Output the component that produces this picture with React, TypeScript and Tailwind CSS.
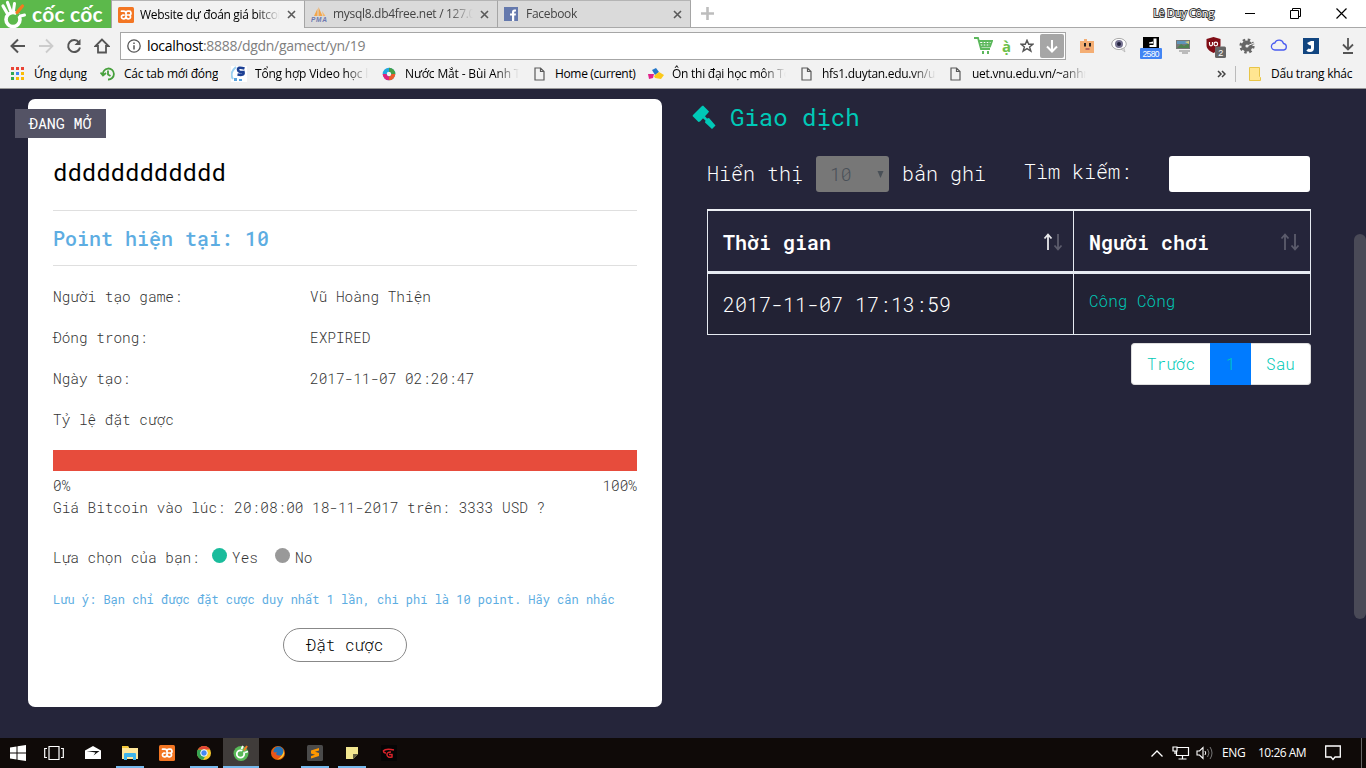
import React from "react";

const mono = "font-['Roboto_Mono','Liberation_Mono',monospace]";

const Svg = ({ s = 16, w, h, vb, children }: { s?: number; w?: number; h?: number; vb?: string; children: React.ReactNode }) => (
  <svg width={w ?? s} height={h ?? s} viewBox={vb ?? `0 0 ${w ?? s} ${h ?? s}`} fill="none" className="block shrink-0">
    {children}
  </svg>
);

const Xampp = () => (
  <Svg vb="0 0 16 16">
    <rect width="16" height="16" rx="1.500" fill="#f37623" />
    <path d="M3.500 4.200h2C7.500 4.200 8 5 8 6.500v3c0 1.500.5 2.300 2.300 2.300h.4a1.900 1.900 0 0 0 .6-3.700 1.900 1.900 0 0 0-.6-3.900H10C8.500 4.200 8 5 8 6.500M8 9.500c0 1.500-.5 2.300-2.300 2.300h-.4a1.900 1.900 0 0 1-.6-3.700H6M8 8h3" stroke="#fff" strokeWidth="1.700" strokeLinecap="round" />
  </Svg>
);

const CloseX = () => (
  <Svg s={9}>
    <path d="M1 1l7 7M8 1L1 8" stroke="#5a5a5a" strokeWidth="1.6" />
  </Svg>
);

const PageIcon = () => (
  <Svg w={11} h={14}>
    <path d="M1 1h5.500L10 4.500V13H1zM6.500 1v3.500H10" stroke="#5a5a5a" strokeWidth="1.200" />
  </Svg>
);

const fade = "[mask-image:linear-gradient(to_right,#000_calc(100%_-_24px),transparent)]";

const Tab = ({ icon, label, active, cls }: { icon: React.ReactNode; label: string; active?: boolean; cls: string }) => (
  <div className={`flex h-7 w-[193px] shrink-0 items-center border-r border-t border-r-[#a5a5a5] border-t-[#b4b4b4] pl-[6px] ${active ? "bg-[#f2f2f2]" : "border-b border-b-[#a9a9a9] bg-[#dadada]"}`}>
    {icon}
    <div className={`ml-[6px] w-[140px] overflow-hidden whitespace-nowrap text-[12px] ${fade} ${cls}`}>{label}</div>
    <div className="ml-[7px]"><CloseX /></div>
  </div>
);

const Bookmark = ({ icon, label, w, iw, clip, cls }: { icon: React.ReactNode; label: string; w: string; iw: string; clip?: boolean; cls: string }) => (
  <div className={`flex shrink-0 items-center ${w}`}>
    <div className={`shrink-0 ${iw}`}>{icon}</div>
    <div className={`overflow-hidden whitespace-nowrap ${clip ? `w-[114px] ${fade}` : ""} ${cls}`}>{label}</div>
  </div>
);

const TabStrip = () => (
  <div className="flex h-7 border-b border-[#a9a9a9] bg-white">
    <div className="flex h-7 w-[112px] shrink-0 items-start border-r border-[#a5a5a5] bg-[#5cb94b]">
      <Svg w={28} h={28}>
        <circle cx="13" cy="19.500" r="7" stroke="#fff" strokeWidth="3.600" />
        <path d="M13 19.500l6-6" stroke="#5cb94b" strokeWidth="3" />
        <path d="M3 6l4 7M7.500 2.500l3 8" stroke="#fff" strokeWidth="3.200" strokeLinecap="round" />
        <path d="M13.500 10.500L14.500 3.500M20.500 16l4-1" stroke="#fff" strokeWidth="3" strokeLinecap="round" />
        <path d="M17 12.500l5.500-6.500" stroke="#f47b20" strokeWidth="3.200" strokeLinecap="round" />
      </Svg>
      <div className="ml-[4px] whitespace-nowrap font-['Lato',sans-serif] text-[21px] font-bold leading-[27px] tracking-[0.2px] text-white">cốc cốc</div>
    </div>
    <Tab active icon={<Xampp />} label="Website dự đoán giá bitcoin" cls="text-black tracking-[-0.3px]" />
    <Tab
      icon={
        <Svg>
          <path d="M3 10L6.500 2.500V10zM7.500 10V1l4 9z" fill="#f3a64b" />
          <path d="M11 5l3.500 5H12z" fill="#f6b86b" />
          <text x="0" y="15.500" fontSize="6.500" fontWeight="bold" fontStyle="italic" fontFamily="Liberation Sans" fill="#6c78af" textLength="16">PMA</text>
        </Svg>
      }
      label="mysql8.db4free.net / 127.0.0.1"
      cls="text-[#444] tracking-[-0.3px]"
    />
    <Tab
      icon={
        <Svg w={14} h={14}>
          <rect width="14" height="14" fill="#6579ad" />
          <path d="M8 14V8.500H6V6.500h2V5q0-2.500 2.500-2.500H12v2h-1q-.8 0-.8.8v1.200H12l-.3 2h-1.500V14z" fill="#fff" />
        </Svg>
      }
      label="Facebook"
      cls="text-[#444] tracking-[-0.3px] !ml-[8px]"
    />
    <div className="flex w-8 items-center justify-center">
      <Svg s={13}><path d="M6.500 0v13M0 6.500h13" stroke="#bdbdbd" strokeWidth="2.600" /></Svg>
    </div>
    <div className="flex-1" />
    <div className="mr-[31px] flex items-center whitespace-nowrap text-[11px] tracking-[-0.3px] text-white [paint-order:stroke_fill] [-webkit-text-stroke:1.800px_#333]">Lê Duy Công</div>
    <div className="flex items-center pr-[19px]">
      <div className="mr-[35px] h-px w-[10px] bg-black" />
      <Svg s={11}><path d="M.5 2.500h8v8h-8zM2.500 2.500v-2h8v8h-2" stroke="#000" /></Svg>
      <div className="ml-[35px]"><Svg s={11}><path d="M.5.500l10 10M10.500.500l-10 10" stroke="#000" strokeWidth="1.200" /></Svg></div>
    </div>
  </div>
);

const navIcons = [
  <Svg key="b"><path d="M15 8H2M8 1.500L1.500 8 8 14.500" stroke="#555" strokeWidth="2" /></Svg>,
  <Svg key="f"><path d="M1 8h13M8 1.500L14.500 8 8 14.500" stroke="#ccc" strokeWidth="1.800" /></Svg>,
  <Svg key="r"><path d="M13 4.500A6 6 0 1 0 14 9.500" stroke="#555" strokeWidth="2" /><path d="M14.500 1v6h-6z" fill="#555" /></Svg>,
  <Svg key="h"><path d="M8 1.500L1.500 8H4v6.500h8V8h2.500z" stroke="#555" strokeWidth="1.800" /></Svg>,
];

const extIcons = [
  <Svg key="1" s={16}><path d="M1 3h4V1h3v2h7v12H1z" fill="#f4ae74" /><path d="M6 5v3.500M11 5v3.500" stroke="#222" strokeWidth="2" /><path d="M6.500 11h4" stroke="#a55" strokeWidth="1.600" /></Svg>,
  <Svg key="2" s={16}><ellipse cx="8" cy="7" rx="7.300" ry="5.600" fill="#fff" stroke="#aaa" /><path d="M10 12l4 3-1-4z" fill="#ddd" stroke="#aaa" strokeWidth=".6" /><circle cx="8" cy="7" r="4" fill="#767391" /><circle cx="8" cy="7" r="2" fill="#242440" /></Svg>,
  <Svg key="3" w={22} h={24}><rect x="3" y="1" width="16" height="12" fill="#000" /><path d="M13.500 2.500h3V11h-7V9h4zM9 6.500l4-1v2H9z" fill="#fff" /><rect y="12" width="22" height="11" rx="1" fill="#4285f4" /><text x="2.500" y="20.500" fontSize="8.500" fontFamily="Liberation Sans" fill="#fff" textLength="17">2580</text></Svg>,
  <Svg key="4" s={16}><rect x="1" y="2" width="14" height="9" fill="#777" /><path d="M2 3h12v3H2z" fill="#5f95ba" /><path d="M2 10l4-4 3 2 5-3v5z" fill="#4e8350" /><path d="M10 4l4-1v3z" fill="#d8d080" /><path d="M4 13h11M7 15h6" stroke="#bbb" strokeWidth="2" /></Svg>,
  <Svg key="5" w={22} h={22}><path d="M9.500 1l7 2v6c0 4-3 6-7 8-4-2-7-4-7-8V3z" fill="#800d16" /><path d="M5.500 6v2q0 1.800 1.500 1.800T8.500 8V6" stroke="#fff" strokeWidth="1.200" /><circle cx="11.800" cy="8" r="1.800" stroke="#fff" strokeWidth="1.200" /><rect x="11" y="10.500" width="11" height="11.500" rx="1.500" fill="#666" /><text x="14.200" y="19.500" fontSize="9" fontFamily="Liberation Sans" fill="#fff">2</text></Svg>,
  <Svg key="6" s={16}><circle cx="8" cy="8" r="6.400" stroke="#666" strokeWidth="2.400" strokeDasharray="2.500 2.520" /><circle cx="8" cy="8" r="3.600" stroke="#666" strokeWidth="4" /><path d="M8 8l7-3" stroke="#f1f1f1" strokeWidth="1" /></Svg>,
  <Svg key="7" s={18}><path d="M5 14a3.500 3.500 0 0 1-.2-7A4.600 4.600 0 0 1 13.500 7.500 3.300 3.300 0 0 1 13.700 14z" stroke="#4a5cf0" strokeWidth="1.300" /></Svg>,
  <Svg key="8" s={16}><rect width="16" height="16" fill="#114580" /><path d="M9.500 3v7q0 2.500-2.500 2.500-1.700 0-2.500-1" stroke="#fff" strokeWidth="3" /><path d="M4 5l4-2v4.500L6 7z" fill="#fff" /></Svg>,
];

const Toolbar = () => (
  <div className="flex h-[33px] items-center bg-[#f2f2f2] pl-1 pt-[3px]">
    {navIcons.map((n, i) => <div key={i} className="flex w-7 justify-center">{n}</div>)}
    <div className="ml-1 flex h-7 w-[946px] items-center border border-[#a6a6a6] bg-white pl-[6px] pr-[1px]">
      <Svg s={14}><circle cx="7" cy="7" r="6.200" stroke="#555" strokeWidth="1.300" /><path d="M7 6.200v4.300M7 3.500v1.500" stroke="#555" strokeWidth="1.500" /></Svg>
      <div className="ml-[6px] flex-1 whitespace-nowrap pb-px text-[14px] tracking-[-0.3px] text-[#808080]"><span className="text-black">localhost</span>:8888/dgdn/gamect/yn/19</div>
      <Svg w={19} h={18}><path d="M0 1h4l3 11h9M5 4h13l-2 5.500H7" stroke="#5cb85c" strokeWidth="1.800" /><path d="M6 6.800h11M9 4v6M12 4v6M15 4v6" stroke="#5cb85c" strokeWidth="1.400" /><path d="M8 15.500h2M13 15.500h2" stroke="#5cb85c" strokeWidth="3" /></Svg>
      <div className="w-[27px] pb-px text-center text-[15px] font-bold leading-4 text-[#6cbf4a]">ạ̀</div>
      <Svg s={14}><path d="M7 1.200l1.700 4h4.300l-3.400 2.700 1.300 4.300L7 9.700l-3.900 2.500 1.300-4.300L1 5.200h4.300z" stroke="#555" strokeWidth="1.400" /></Svg>
      <div className="ml-[6px] flex h-6 w-6 items-center justify-center rounded-[2px] bg-[#a6a6a6]"><Svg s={14}><path d="M7 1v11M2 7.500l5 5 5-5" stroke="#fff" strokeWidth="2" /></Svg></div>
    </div>
    <div className="ml-[5px] flex items-center">
      {extIcons.map((e, i) => (
        <div key={i} className={`flex h-6 w-8 items-start justify-center ${i === 2 || i === 4 || i === 6 ? "pt-[2px]" : i === 1 ? "pt-[3px]" : "pt-1"}`}>{e}</div>
      ))}
      <div className="ml-[15px]"><Svg w={12} h={16}><path d="M6 0v11M1 6.500l5 5 5-5M1 15h10" stroke="#555" strokeWidth="1.800" /></Svg></div>
    </div>
  </div>
);

const dots = ["#ea4335", "#ea4335", "#ea4335", "#34a853", "#4285f4", "#fbbc05", "#34a853", "#fbbc05", "#fbbc05"];

const Bookmarks = () => (
  <div className="flex h-[28px] items-center border-b border-[#999] bg-[#f2f2f2] pb-[2px] pl-[11px] text-[12px] text-black">
    <Bookmark w="w-[89px]" iw="w-[23px]" label="Ứng dụng" cls="tracking-[-0.25px]" icon={<Svg s={13}>{dots.map((c, i) => <rect key={i} x={(i % 3) * 5} y={Math.floor(i / 3) * 5} width="3" height="3" fill={c} />)}</Svg>} />
    <Bookmark w="w-[131px]" iw="w-[24px]" label="Các tab mới đóng" cls="tracking-[-0.2px]" icon={<Svg s={16}><path d="M3 9A5.500 5.500 0 1 1 8 13.500M8 4.500V8.500l2.500 1.500M.5 6.500L3 9.500l3-2.500" stroke="#46a03c" strokeWidth="1.800" /></Svg>} />
    <Bookmark w="w-[151px]" iw="w-[24px]" clip label="Tổng hợp Video học lập trình" cls="tracking-[-0.2px]" icon={<Svg s={16}><rect width="16" height="16" fill="#fff" /><path d="M5 1Q-2 7 2 13" stroke="#9cd0f0" strokeWidth="2" /><path d="M13.500 2.500Q7 .5 7 3.500t5.500 2.500q1 4-6 2.500" stroke="#1c3f94" strokeWidth="2.600" /><path d="M3 12h3v3H3zM8 13h3v2H8z" fill="#5ba3dd" /></Svg>} />
    <Bookmark w="w-[152px]" iw="w-[23px]" clip label="Nước Mắt - Bùi Anh Tuấn" cls="tracking-[-0.15px]" icon={<Svg s={14}><circle cx="7" cy="7" r="4.300" stroke="#21a8e0" strokeWidth="4" /><path d="M7 2.700A4.300 4.300 0 0 1 11.300 7" stroke="#43a047" strokeWidth="4" /><path d="M11.300 7A4.300 4.300 0 0 1 7 11.300" stroke="#ef5c2c" strokeWidth="4" /><path d="M7 11.300A4.300 4.300 0 0 1 2.700 7" stroke="#e0247c" strokeWidth="4" /></Svg>} />
    <Bookmark w="w-[114px]" iw="w-[21px]" label="Home (current)" cls="tracking-[-0.35px]" icon={<PageIcon />} />
    <Bookmark w="w-[153px]" iw="w-[24px]" clip label="Ôn thi đại học môn Toán" cls="tracking-[-0.25px]" icon={<Svg s={16}><path d="M4 4l4-2 3 4-4 3z" fill="#2477c9" /><path d="M0 8h6l-1 4-4 1z" fill="#e2228b" /><path d="M6 10l5-4 5 3-3 4-6-1z" fill="#fbc91b" /></Svg>} />
    <Bookmark w="w-[149px]" iw="w-[21px]" clip label="hfs1.duytan.edu.vn/upload" cls="tracking-[-0.3px]" icon={<PageIcon />} />
    <Bookmark w="w-[267px]" iw="w-[22px]" clip label="uet.vnu.edu.vn/~anhnt" cls="tracking-[-0.25px]" icon={<PageIcon />} />
    <Svg w={9} h={8}><path d="M1 1l3 3-3 3M5 1l3 3-3 3" stroke="#444" strokeWidth="1.500" /></Svg>
    <div className="ml-[9px] h-4 w-px bg-[#bbb]" />
    <div className="ml-[13px] flex items-center whitespace-nowrap tracking-[-0.25px]">
      <Svg w={12} h={14}><path d="M.5.500h10v9l1 1v3H.5z" fill="#ffe591" stroke="#e8c547" /></Svg>
      <span className="ml-[10px]">Dấu trang khác</span>
    </div>
  </div>
);

const Row = ({ a, b }: { a: string; b?: string }) => (
  <div className="flex h-[41px] items-center">
    <div className="w-[257px]">{a}</div>
    <div>{b}</div>
  </div>
);

const GameCard = () => (
  <section className="relative ml-7 mt-[10px] h-[608px] w-[634px] shrink-0 rounded-[7px] bg-white px-[25px] text-[14.4px] font-light text-[#333]">
    <div className="absolute left-[-13px] top-[10px] flex h-[29px] w-[91px] items-center whitespace-nowrap bg-[#545365] pl-[14px] text-[15px] font-normal tracking-[-0.1px] text-white">ĐANG MỞ</div>
    <h1 className="h-[112px] border-b border-[#dfdfdf] pt-[55px] text-[24px] font-normal leading-[36px] text-black">dddddddddddd</h1>
    <div className="flex h-[55px] items-center border-b border-[#dfdfdf] pb-px text-[20px] font-medium text-[#5dade2]">Point hiện tại: 10</div>
    <div className="pt-[10px]">
      <Row a="Người tạo game:" b="Vũ Hoàng Thiện" />
      <Row a="Đóng trong:" b="EXPIRED" />
      <Row a="Ngày tạo:" b="2017-11-07 02:20:47" />
      <Row a="Tỷ lệ đặt cược" />
    </div>
    <div className="mt-[10px] h-[21px] bg-[#e74c3c]" />
    <div className="mt-[4px] flex justify-between leading-[22px]"><span>0%</span><span>100%</span></div>
    <div className="leading-[22px]">Giá Bitcoin vào lúc: 20:08:00 18-11-2017 trên: 3333 USD ?</div>
    <div className="mt-[28px] flex items-center leading-[22px]">
      <span className="w-[159px]">Lựa chọn của bạn:</span>
      <span className="-mt-[5px] h-[15px] w-[15px] rounded-full bg-[#1abc9c]" />
      <span className="ml-[5px] w-[43px]">Yes</span>
      <span className="-mt-[5px] h-[15px] w-[15px] rounded-full bg-[#999]" />
      <span className="ml-[5px]">No</span>
    </div>
    <div className="mt-[19px] whitespace-nowrap text-[12px] font-normal leading-[22px] text-[#5dade2]">Lưu ý: Bạn chỉ được đặt cược duy nhất 1 lần, chi phí là 10 point. Hãy cân nhắc</div>
    <div className="mt-[18px] flex justify-center">
      <button className="h-[34px] w-[124px] rounded-full border border-[#888] text-[16px] font-light text-black">Đặt cược</button>
    </div>
  </section>
);

const Sort = ({ on }: { on?: boolean }) => (
  <Svg w={20} h={18}>
    <path d="M5 17V2M1.500 5.500L5 1.500l3.500 4" stroke={on ? "#e8e8ea" : "#5c5c6c"} strokeWidth="1.800" />
    <path d="M15 1v15M11.500 12.500l3.500 4 3.500-4" stroke="#5c5c6c" strokeWidth="1.800" />
  </Svg>
);

const Trades = () => (
  <section className="ml-[30px] w-[619px] text-[20px] font-light text-white">
    <h2 className="mt-[10px] flex h-9 items-center text-[24px] font-normal text-[#00c9b7]">
      <Svg w={24} h={24}>
        <path d="M1 10L9.500 1.500 11 .5l6 6-1 1.500-8 8.500-1.500.5-6-6z" fill="#00c9b7" />
        <path d="M11.500 9.500l3.500 4 2-.5 6.500 7.500-3.500 3.500-7-6.500.5-2-4-3.500z" fill="#00c9b7" />
      </Svg>
      <span className="ml-[14px]">Giao dịch</span>
    </h2>
    <div className="ml-[15px] mt-[21px] flex h-9 items-center whitespace-nowrap">
      <span className="w-[109px] pb-[3px]">Hiển thị</span>
      <div className="flex h-9 w-[73px] items-center justify-between rounded-[3px] bg-[#777] pl-[14px] pr-[5px] text-[18px] text-[#495057]">
        <span>10</span>
        <Svg w={7} h={7}><path d="M.5 0h6L3.500 7z" fill="#495057" /></Svg>
      </div>
      <span className="ml-[13px] w-[122px] pb-[3px]">bản ghi</span>
      <span className="w-[145px] pb-[7px]">Tìm kiếm:</span>
      <div className="h-9 w-[141px] rounded-[3px] bg-white" />
    </div>
    <div className="ml-[15px] mt-[17px] grid w-[604px] grid-cols-[367px_237px] border-t-2 border-[#edf0f4]">
      <div className="flex h-[63px] items-center justify-between border-b-3 border-l border-r border-[#e6eaf1] pl-[15px] pr-[10px] pt-px font-semibold text-white"><span>Thời gian</span><Sort on /></div>
      <div className="flex h-[63px] items-center justify-between border-b-3 border-r border-[#e6eaf1] pl-[15px] pr-[10px] pt-px font-semibold text-white"><span>Người chơi</span><Sort /></div>
      <div className="flex h-[61px] items-center border-b border-l border-r border-[#e6eaf1] bg-[#222234] pl-[15px]">2017-11-07 17:13:59</div>
      <div className="flex h-[61px] items-center border-b border-r border-[#e6eaf1] bg-[#222234] pb-[6px] pl-[15px] text-[16px] text-[#00c9b7]">Công Công</div>
    </div>
    <div className="mt-2 flex h-[42px] justify-end text-[16px] text-[#00c9b7]">
      <div className="flex w-[79px] items-center justify-center rounded-l border border-r-0 border-[#ddd] bg-white">Trước</div>
      <div className="flex w-[41px] items-center justify-center bg-[#007bff]">1</div>
      <div className="flex w-[60px] items-center justify-center rounded-r border border-l-0 border-[#ddd] bg-white">Sau</div>
    </div>
  </section>
);

const taskIcons: { icon: React.ReactNode; line?: boolean; active?: boolean }[] = [
  { icon: <Svg><path d="M0 5.500L8 1l8 4.500V14H0z" fill="#fff" /><path d="M1.500 6h13L8.500 10.500 10.500 7.500z" fill="#111" /></Svg> },
  { line: true, icon: <Svg><path d="M0 1h6l1 2h9v11H0z" fill="#ffe69a" /><path d="M0 1h6l1 2H0z" fill="#f5c93a" /><path d="M2 15V9q0-1 1-1h10q1 0 1 1v6h-3v-3H5v3z" fill="#3fb4e8" /></Svg> },
  { icon: <Xampp /> },
  { line: true, icon: <Svg><circle cx="8" cy="8" r="7" fill="#f9ca2c" /><path d="M8 4.500L1.900 4.500A7 7 0 0 0 7 15l3-5z" fill="#35a353" /><path d="M1.900 4.500A7 7 0 0 1 14.100 4.500H8z" fill="#e24435" /><circle cx="8" cy="8" r="3.300" fill="#4387f4" stroke="#fff" /></Svg> },
  { active: true, line: true, icon: <Svg><circle cx="8" cy="8.500" r="7.500" fill="#58b957" /><circle cx="7.500" cy="9" r="3.700" stroke="#fff" strokeWidth="1.800" /><path d="M8 9l3-4" stroke="#58b957" strokeWidth="2" /><path d="M8.500 4L10 1M12 7.500l3-1" stroke="#fff" strokeWidth="1.800" /><path d="M11 5.500L14 1" stroke="#f47b20" strokeWidth="2" /></Svg> },
  { icon: <Svg><circle cx="8" cy="8" r="7" fill="#e66000" /><circle cx="8.500" cy="6.500" r="5" fill="#2474b8" /><path d="M2 4q0 3 3 3.500l2-.5-1 2q2 2.500 5 1-1 4-6 3Q0 10 2 4z" fill="#e8541c" /><path d="M13.500 5q2.500 8-6 9.500 6-4 6-9.500z" fill="#ffcb37" /></Svg> },
  { line: true, icon: <Svg><rect width="16" height="16" rx="1.500" fill="#4a4a4a" /><path d="M12 3L4 5.500v3l4 1.200L4 11v2.500l8-2.500V8L8 6.700l4-1.200z" fill="#ff9800" /></Svg> },
  { line: true, icon: <Svg><path d="M2 2h12v7l-5 5H2z" fill="#f2e690" /><path d="M9 14V9h5z" fill="#605c40" /></Svg> },
  { icon: <Svg><rect width="16" height="16" rx="1" fill="#050505" /><path d="M2 6q3-3 11-1M2.500 6q0 2 2.500 2M10 7q-4.500 0-4 3t5 2V9.500H8" stroke="#d8232a" strokeWidth="1.500" /></Svg> },
];

const Taskbar = () => (
  <footer className="flex h-[30px] items-center bg-[#0f0a08] text-white">
    <div className="flex w-9 justify-center"><Svg><path d="M0 2.500L6.500 1.500V7.500H0zM7.500 1.300L16 0v7.500H7.500zM0 8.500h6.500v6L0 13.500zM7.500 8.500H16V16l-8.500-1.300z" fill="#fff" /></Svg></div>
    <div className="flex w-9 justify-center"><Svg w={20} h={14}><path d="M5 .500h10v13H5zM3 2.500H.700v9H3M17 2.500h2.300v9H17" stroke="#fff" strokeWidth="1.200" /></Svg></div>
    <div className="ml-[3px] flex">
      {taskIcons.map((t, i) => (
        <div key={i} className={`mr-px flex h-[30px] w-9 flex-col items-center ${t.active ? "bg-[#403c3a]" : ""}`}>
          <div className="flex h-7 items-center pt-[2px]">{t.icon}</div>
          {t.line && <div className={`h-[2px] bg-[#76b9ed] ${t.active ? "w-9" : "w-7"}`} />}
        </div>
      ))}
    </div>
    <div className="flex-1" />
    <Svg w={12} h={7}><path d="M.5 6.500L6 1l5.500 5.500" stroke="#fff" strokeWidth="1.300" /></Svg>
    <div className="ml-[9px]"><Svg w={18} h={14}><path d="M5 1.500h11.500v8H4.500V5M1 1h4v4H1zM3 5v3M10.500 10v3M6.500 13h8" stroke="#fff" strokeWidth="1.200" /></Svg></div>
    <div className="ml-[6px]"><Svg w={17} h={14}><path d="M1 5h2.500L7 1.500v11L3.500 9H1z" stroke="#fff" strokeWidth="1.100" /><path d="M9 5q1.500 2 0 4" stroke="#fff" /><path d="M11.500 3q3 4 0 8M14 1q4 6 0 12" stroke="#777" /></Svg></div>
    <div className="ml-[9px] w-[36px] whitespace-nowrap text-[12px] tracking-[-0.4px]">ENG</div>
    <div className="w-[67px] whitespace-nowrap text-[12px] tracking-[-0.5px]">10:26 AM</div>
    <Svg w={16} h={16}><path d="M.700 1h14.600v11H10l-2 2.500L6 12H.700z" stroke="#fff" strokeWidth="1.300" /></Svg>
    <div className="ml-[20px] mr-1 h-[30px] w-px bg-[#666]" />
  </footer>
);

export default function App() {
  return (
    <div className="flex h-[768px] w-[1366px] flex-col overflow-hidden font-['Open_Sans','Noto_Sans',sans-serif]">
      <header>
        <TabStrip />
        <Toolbar />
        <Bookmarks />
      </header>
      <main className={`flex h-[649px] bg-[#25253a] ${mono}`}>
        <GameCard />
        <Trades />
        <div className="flex-1" />
        <div className="mt-[145px] h-[385px] w-3 rounded-full bg-[#4a4a57]" />
      </main>
      <Taskbar />
    </div>
  );
}
